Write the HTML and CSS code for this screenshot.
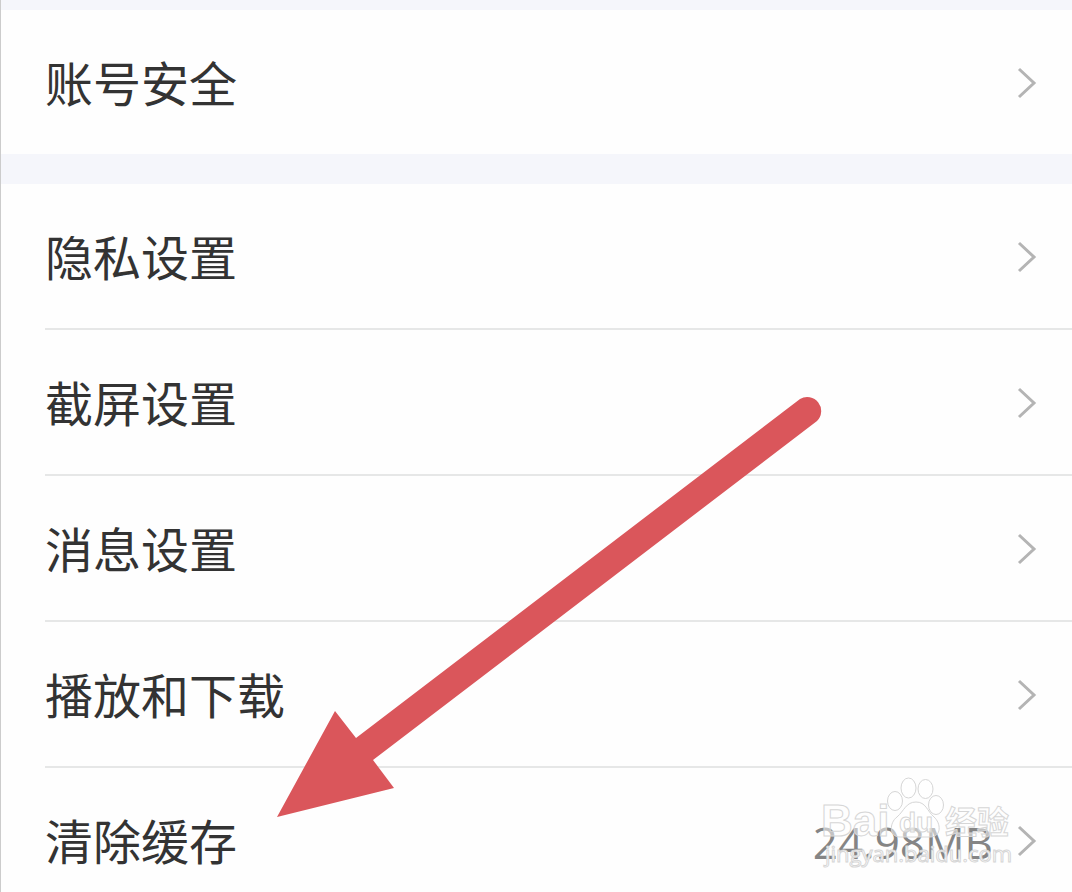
FILE: index.html
```
<!DOCTYPE html>
<html lang="zh-CN">
<head>
    <meta charset="UTF-8" />
    <meta name="viewport" content="width=device-width, initial-scale=1.0" />
    <title>设置</title>
    <link rel="stylesheet" href="styles.css">
</head>
<body>
    <main class="settings">
        <nav class="group">
            <a class="row" href="#account">
                <span class="label">账号安全</span>
                <svg class="chevron" viewBox="0 0 20 32"><path d="M2 2 L17 16 L2 30" /></svg>
            </a>
        </nav>
        <nav class="group">
            <a class="row" href="#privacy">
                <span class="label">隐私设置</span>
                <svg class="chevron" viewBox="0 0 20 32"><path d="M2 2 L17 16 L2 30" /></svg>
            </a>
            <a class="row" href="#screenshot">
                <span class="label">截屏设置</span>
                <svg class="chevron" viewBox="0 0 20 32"><path d="M2 2 L17 16 L2 30" /></svg>
            </a>
            <a class="row" href="#message">
                <span class="label">消息设置</span>
                <svg class="chevron" viewBox="0 0 20 32"><path d="M2 2 L17 16 L2 30" /></svg>
            </a>
            <a class="row" href="#download">
                <span class="label">播放和下载</span>
                <svg class="chevron" viewBox="0 0 20 32"><path d="M2 2 L17 16 L2 30" /></svg>
            </a>
            <a class="row" href="#cache">
                <span class="label">清除缓存</span>
                <span class="value">24.98MB</span>
                <svg class="chevron" viewBox="0 0 20 32"><path d="M2 2 L17 16 L2 30" /></svg>
                <svg class="watermark" viewBox="0 0 200 100">
                    <g class="paw">
                        <ellipse cx="82" cy="33" rx="7.5" ry="9.5" />
                        <ellipse cx="95.5" cy="20" rx="7.5" ry="10" />
                        <ellipse cx="112.5" cy="21" rx="7.5" ry="9.5" />
                        <ellipse cx="123" cy="37" rx="7.5" ry="9.5" />
                        <path d="M103 34 C93 34 91 43 84 49 C76 55 76 69 87 69 H117 C129 69 128 55 121 49 C114 43 113 34 103 34 Z" />
                    </g>
                    <text class="brand" x="8" y="68">Bai</text>
                    <text class="du" x="86" y="64">du</text>
                    <text class="jingyan" x="132" y="66">经验</text>
                    <text class="site" x="12" y="94">jingyan.baidu.com</text>
                </svg>
            </a>
        </nav>
        <svg class="arrow" viewBox="0 0 546 422">
            <path d="M1 421 L59 315 L80 342 L524 3 A14 14 0 0 1 541 25 L97 364 L118 392 Z" />
        </svg>
    </main>
</body>
</html>
```
FILE: styles.css
```
* {
    box-sizing: border-box;
    margin: 0;
    padding: 0;
}

body {
    font-family: "Noto Sans CJK SC", sans-serif;
    background: #f5f6fb;
    color: #333;
    height: 100vh;
    overflow: hidden;
}

.settings {
    position: relative;
    display: flex;
    flex-direction: column;
    gap: 30px;
    padding-top: 10px;
    border-left: 1px solid #ccc;
}

.group {
    background: #fefefe;
}

.row {
    position: relative;
    display: flex;
    align-items: center;
    height: 144px;
    padding: 2px 35px 0 44px;
    color: inherit;
    text-decoration: none;
}

/* divider starts at the label, not at the screen edge */
.row + .row {
    height: 146px;
    padding-top: 4px;
}

.row + .row::before {
    content: "";
    position: absolute;
    top: 0;
    left: 44px;
    right: 0;
    height: 2px;
    background: #e6e7e7;
}

.label {
    flex: 1;
    padding-bottom: 4px;
    font-size: 48px;
    line-height: 64px;
}

.value {
    margin-right: 24px;
    padding-top: 2px;
    font-family: "Open Sans", sans-serif;
    font-size: 44px;
    line-height: 64px;
    color: #858585;
}

.chevron {
    width: 20px;
    height: 32px;
    fill: none;
    stroke: #b4b4b4;
    stroke-width: 3;
}

.arrow {
    position: absolute;
    top: 396px;
    left: 275px;
    width: 546px;
    height: 422px;
    fill: #da565b;
    pointer-events: none;
}

.watermark {
    position: absolute;
    top: 2px;
    right: 59px;
    width: 200px;
    height: 100px;
    fill: rgba(255, 255, 255, 0.5);
    stroke: #d6d6d6;
    stroke-width: 1;
    pointer-events: none;
}

.brand,
.du,
.site {
    font-family: "Liberation Sans", sans-serif;
    font-weight: bold;
}

.brand {
    font-size: 44px;
}

.du {
    font-size: 28px;
}

.jingyan {
    font-size: 32px;
    font-weight: bold;
}

.site {
    font-family: "Open Sans", sans-serif;
    font-size: 22px;
    font-weight: normal;
    fill: #fff;
}
```
